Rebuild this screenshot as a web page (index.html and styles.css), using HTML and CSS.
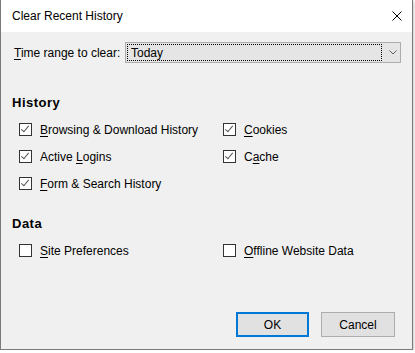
FILE: index.html
```html
<!DOCTYPE html>
<html>
<head>
<meta charset="utf-8">
<link rel="stylesheet" href="styles.css">
</head>
<body>
<div class="window">
  <div class="titlebar">
    <span class="title">Clear Recent History</span>
    <svg class="close" width="10" height="10" viewBox="0 0 10 10"><path d="M0.5 0.5 L9.5 9.5 M9.5 0.5 L0.5 9.5" stroke="#000" stroke-width="1" fill="none"/></svg>
  </div>
  <div class="content">
    <div class="range-row">
      <span class="range-label"><u>T</u>ime range to clear:</span>
      <div class="select">
        <div class="select-value"><span>Today</span></div>
        <svg class="chevron" width="8" height="5" viewBox="0 0 8 5"><path d="M0.5 0.5 L4 4 L7.5 0.5" stroke="#606060" stroke-width="1" fill="none"/></svg>
      </div>
    </div>

    <div class="section-title history-title">History</div>
    <div class="checks">
      <label class="check"><span class="box on"></span><span><u>B</u>rowsing &amp; Download History</span></label>
      <label class="check"><span class="box on"></span><span><u>C</u>ookies</span></label>
      <label class="check"><span class="box on"></span><span>Active <u>L</u>ogins</span></label>
      <label class="check"><span class="box on"></span><span>C<u>a</u>che</span></label>
      <label class="check"><span class="box on"></span><span><u>F</u>orm &amp; Search History</span></label>
    </div>

    <div class="section-title data-title">Data</div>
    <div class="checks">
      <label class="check"><span class="box"></span><span><u>S</u>ite Preferences</span></label>
      <label class="check"><span class="box"></span><span><u>O</u>ffline Website Data</span></label>
    </div>
  </div>
  <div class="footer">
    <button class="btn default">OK</button>
    <button class="btn">Cancel</button>
  </div>
</div>
</body>
</html>
```

FILE: styles.css
```css
html, body {
  margin: 0;
  padding: 0;
  background: #ffffff;
}
body {
  font-family: "Liberation Sans", Arial, sans-serif;
  font-size: 12px;
  color: #000;
}
u {
  text-underline-offset: 2px;
}
.window {
  width: 413px;
  height: 350px;
  box-sizing: border-box;
  border: 1px solid #7a7a7a;
  border-top: none;
  background: #f0f0f0;
  display: flex;
  flex-direction: column;
  box-shadow: 1px 1px 3px rgba(0, 0, 0, 0.22);
}
.titlebar {
  height: 32px;
  flex: none;
  background: #fff;
  display: flex;
  align-items: center;
  padding: 0 10px 0 11px;
}
.title {
  font-size: 12px;
}
.close {
  margin-left: auto;
  display: block;
}
.content {
  padding: 10px 0 0 11px;
}
.range-row {
  display: flex;
  align-items: center;
  height: 21px;
  padding-left: 2px;
}
.range-label {
  width: 111px;
  flex: none;
}
.select {
  width: 276px;
  height: 21px;
  box-sizing: border-box;
  border: 1px solid #adadad;
  background: #e5e5e5;
  display: flex;
  align-items: center;
  padding: 1px;
}
.select-value {
  width: 255px;
  height: 17px;
  box-sizing: border-box;
  border: 1px dotted #000;
  display: flex;
  align-items: center;
  padding-left: 3px;
}
.chevron {
  display: block;
  margin-left: 7px;
}
.section-title {
  font-weight: bold;
  font-size: 13px;
  letter-spacing: 0.5px;
  line-height: 16px;
}
.history-title {
  margin-top: 32px;
}
.data-title {
  margin-top: 19px;
}
.checks {
  display: grid;
  grid-template-columns: 204px 1fr;
  grid-auto-rows: 27px;
  margin-top: 5px;
  margin-left: 7px;
}
.check {
  display: flex;
  align-items: center;
  gap: 8px;
}
.box {
  width: 13px;
  height: 13px;
  box-sizing: border-box;
  border: 1px solid #333;
  background: #fff;
  flex: none;
  position: relative;
}
.box.on::after {
  content: "";
  position: absolute;
  left: 3px;
  top: 0px;
  width: 3px;
  height: 7px;
  border-right: 1px solid #555;
  border-bottom: 1px solid #555;
  transform: rotate(40deg);
  transform-origin: center;
}
.footer {
  margin-top: auto;
  display: flex;
  justify-content: flex-end;
  gap: 12px;
  padding: 0 17px 12px 0;
}
.btn {
  font-family: "Liberation Sans", Arial, sans-serif;
  font-size: 12px;
  color: #000;
  width: 74px;
  height: 25px;
  box-sizing: border-box;
  background: #e1e1e1;
  border: 1px solid #adadad;
  padding: 0;
  margin: 0;
}
.btn.default {
  width: 73px;
  border: 2px solid #0078d7;
}
```
